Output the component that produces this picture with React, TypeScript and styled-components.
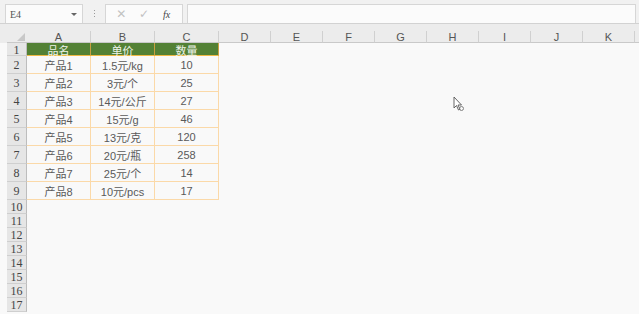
import React from 'react';
import styled, { createGlobalStyle } from 'styled-components';

const GlobalStyle = createGlobalStyle`
    body {
        margin: 0;
        background: #f9f9f9;
        font-family: "Liberation Sans", "Noto Sans CJK SC", sans-serif;
        overflow: hidden;
    }
`;

const Page = styled.div`
    position: relative;
    width: 639px;
    height: 314px;
    overflow: hidden;
    background: #f9f9f9;
`;

const FormulaBar = styled.div`
    display: flex;
    align-items: flex-end;
    height: 23px;
    padding: 0 3px 0 5px;
    background: #f1f1f1;
    border-bottom: 1px solid #d2d2d2;
    box-sizing: content-box;
`;

const NameBox = styled.div`
    display: flex;
    align-items: center;
    justify-content: space-between;
    width: 78px;
    height: 19px;
    box-sizing: border-box;
    padding: 0 5px 0 4px;
    background: #fbfbfb;
    border: 1px solid #d6d6d6;
    border-bottom: none;
    font-family: "Liberation Serif", "Noto Sans CJK SC", serif;
    font-size: 10px;
    color: #555;
`;

const Caret = styled.span`
    width: 0;
    height: 0;
    border-left: 3px solid transparent;
    border-right: 3px solid transparent;
    border-top: 3px solid #666;
`;

const Grip = styled.div`
    display: flex;
    flex-direction: column;
    gap: 2px;
    width: 22px;
    align-items: center;
    align-self: center;
    margin-top: 4px;
`;

const GripDot = styled.span`
    width: 1px;
    height: 1px;
    background: #9a9a9a;
`;

const FuncBox = styled.div`
    display: flex;
    align-items: center;
    justify-content: space-around;
    width: 78px;
    height: 19px;
    box-sizing: border-box;
    padding: 0 4px;
    background: #fbfbfb;
    border: 1px solid #d6d6d6;
    border-bottom: none;
`;

const FuncIcon = styled.span<{ $dark?: boolean }>`
    font-size: ${(p) => (p.$dark ? '10px' : '12px')};
    font-style: ${(p) => (p.$dark ? 'italic' : 'normal')};
    font-family: ${(p) => (p.$dark ? '"Liberation Serif", serif' : '"DejaVu Sans", sans-serif')};
    color: ${(p) => (p.$dark ? '#444' : '#c2c2c2')};
    width: 18px;
    text-align: center;
`;

const FormulaInput = styled.div`
    flex: 1;
    height: 19px;
    margin-left: 4px;
    background: #fbfbfb;
    border: 1px solid #d6d6d6;
    border-bottom: none;
    box-sizing: border-box;
`;

const Sheet = styled.div`
    display: flex;
    padding-top: 7px;
    background: linear-gradient(#ececec 0 19px, #f9f9f9 19px);
`;

const Gutter = styled.div`
    width: 7px;
    flex-shrink: 0;
`;

const Grid = styled.div`
    display: grid;
    grid-template-columns: 20px repeat(3, 64px) repeat(8, 52px) 1fr;
    grid-template-rows: 12px 13px repeat(8, 18px) repeat(8, 14px);
    flex: 1;
`;

const Corner = styled.div`
    position: relative;
    background: #ececec;
    border-bottom: 1px solid #c9c9c9;
    &::after {
        content: '';
        position: absolute;
        right: 2px;
        bottom: 1px;
        border-left: 8px solid transparent;
        border-bottom: 8px solid #c8c8c8;
    }
`;

const ColHead = styled.div<{ $last?: boolean }>`
    display: flex;
    align-items: center;
    justify-content: center;
    background: #ececec;
    border-right: ${(p) => (p.$last ? 'none' : '1px solid #d0d0d0')};
    border-bottom: 1px solid #c9c9c9;
    font-size: 11px;
    line-height: 1;
    color: #555;
    padding-top: 1px;
`;

const RowHead = styled.div`
    display: flex;
    align-items: center;
    justify-content: center;
    background: #e6e6e6;
    border-bottom: 1px solid #cfcfcf;
    border-right: 1px solid #bdbdbd;
    box-sizing: border-box;
    font-family: "Liberation Serif", "Noto Sans CJK SC", serif;
    font-size: 12px;
    color: #444;
    padding-top: 2px;
`;

const Cell = styled.div<{ $kind: 'head' | 'data' | 'empty' }>`
    display: flex;
    align-items: center;
    justify-content: center;
    box-sizing: border-box;
    font-family: "Liberation Sans", "Noto Sans CJK SC", sans-serif;
    font-size: 11px;
    white-space: nowrap;
    padding-top: 1px;
    background: ${(p) => (p.$kind === 'head' ? '#538135' : 'transparent')};
    color: ${(p) => (p.$kind === 'head' ? '#eef3e8' : '#595959')};
    border-right: ${(p) => (p.$kind === 'empty' ? 'none' : p.$kind === 'head' ? '1px solid #c9a040' : '1px solid #fbd9a8')};
    border-bottom: ${(p) => (p.$kind === 'empty' ? 'none' : p.$kind === 'head' ? '1px solid #f0b944' : '1px solid #fbd9a8')};
`;

const Pointer = styled.svg`
    position: absolute;
    left: 453px;
    top: 96px;
`;

const columns = ['A', 'B', 'C', 'D', 'E', 'F', 'G', 'H', 'I', 'J', 'K'];

const table: string[][] = [
    ['品名', '单价', '数量'],
    ['产品1', '1.5元/kg', '10'],
    ['产品2', '3元/个', '25'],
    ['产品3', '14元/公斤', '27'],
    ['产品4', '15元/g', '46'],
    ['产品5', '13元/克', '120'],
    ['产品6', '20元/瓶', '258'],
    ['产品7', '25元/个', '14'],
    ['产品8', '10元/pcs', '17'],
];

function App() {
    const rows = Array.from({ length: 17 }, (_, i) => i + 1);

    return (
        <Page>
            <GlobalStyle />
            <FormulaBar>
                <NameBox>
                    E4
                    <Caret />
                </NameBox>
                <Grip>
                    <GripDot />
                    <GripDot />
                    <GripDot />
                </Grip>
                <FuncBox>
                    <FuncIcon>✕</FuncIcon>
                    <FuncIcon>✓</FuncIcon>
                    <FuncIcon $dark>fx</FuncIcon>
                </FuncBox>
                <FormulaInput />
            </FormulaBar>
            <Sheet>
                <Gutter />
                <Grid>
                    <Corner />
                    {columns.map((c) => (
                        <ColHead key={c}>{c}</ColHead>
                    ))}
                    <ColHead $last />
                    {rows.map((r) => (
                        <React.Fragment key={r}>
                            <RowHead>{r}</RowHead>
                            {columns.map((c, ci) => {
                                const value = table[r - 1]?.[ci];
                                const kind = value === undefined ? 'empty' : r === 1 ? 'head' : 'data';
                                return (
                                    <Cell key={c} $kind={kind}>
                                        {value}
                                    </Cell>
                                );
                            })}
                            <Cell $kind="empty" />
                        </React.Fragment>
                    ))}
                </Grid>
            </Sheet>
            <Pointer width="12" height="16" viewBox="0 0 12 16">
                <path d="M1 1 L1 12 L3.5 9.5 L5.5 14 L7 13.3 L5 9 L8.5 9 Z" fill="#fff" stroke="#555" strokeWidth="0.9" />
                <circle cx="8.5" cy="12.5" r="2" fill="none" stroke="#777" strokeWidth="0.9" />
            </Pointer>
        </Page>
    );
}

export default App;
